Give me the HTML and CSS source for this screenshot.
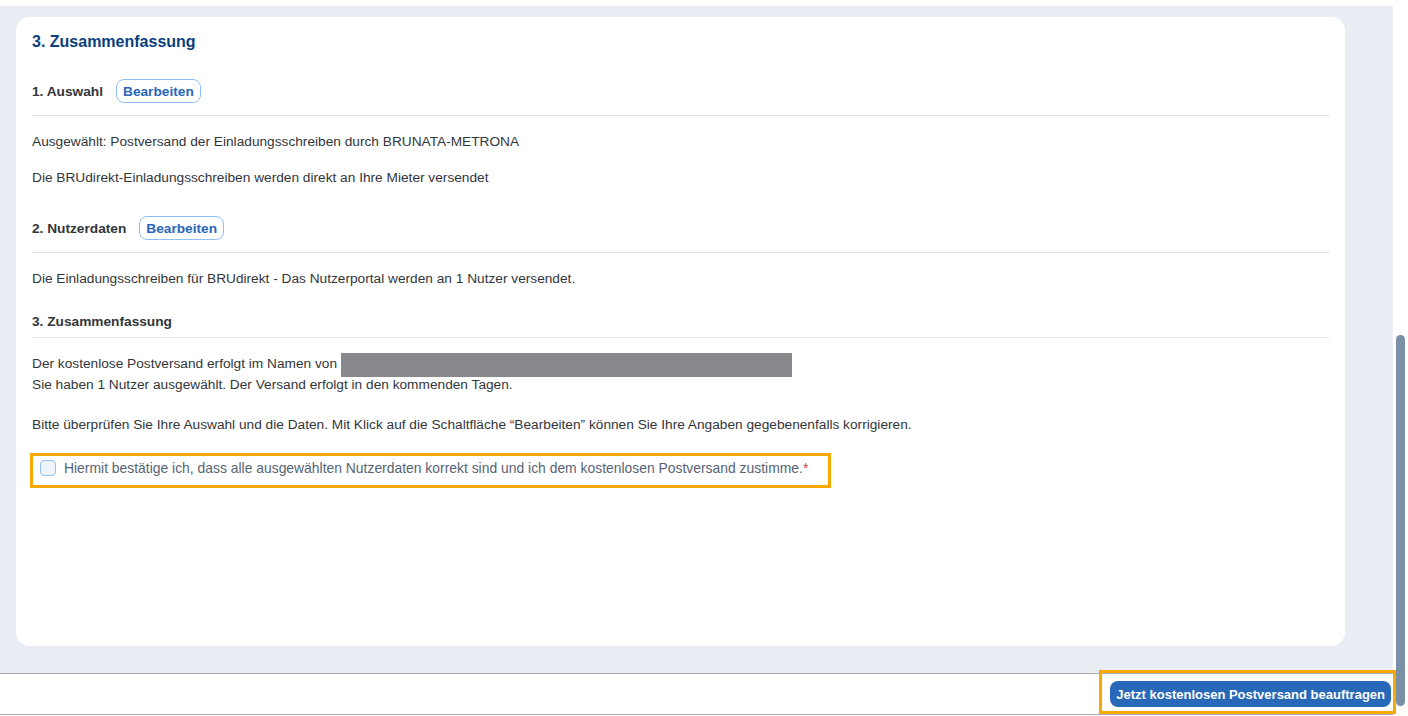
FILE: index.html
```html
<!DOCTYPE html>
<html lang="de">
<head>
    <meta charset="UTF-8">
    <meta name="viewport" content="width=device-width, initial-scale=1.0">
    <title>Zusammenfassung</title>
    <link rel="stylesheet" href="styles.css">
</head>
<body>
    <div class="app">
        <div class="main">
            <div class="content">
                <div class="card">
                    <h2 class="title">3. Zusammenfassung</h2>

                    <div class="section-head">
                        <span class="section-title">1. Auswahl</span>
                        <button class="edit-btn">Bearbeiten</button>
                    </div>
                    <p class="text">Ausgewählt: Postversand der Einladungsschreiben durch BRUNATA-METRONA</p>
                    <p class="text">Die BRUdirekt-Einladungsschreiben werden direkt an Ihre Mieter versendet</p>

                    <div class="section-head next">
                        <span class="section-title">2. Nutzerdaten</span>
                        <button class="edit-btn">Bearbeiten</button>
                    </div>
                    <p class="text">Die Einladungsschreiben für BRUdirekt - Das Nutzerportal werden an 1 Nutzer versendet.</p>

                    <div class="section-head plain">
                        <span class="section-title">3. Zusammenfassung</span>
                    </div>
                    <p class="text">Der kostenlose Postversand erfolgt im Namen von<span class="redacted"></span><br>Sie haben 1 Nutzer ausgewählt. Der Versand erfolgt in den kommenden Tagen.</p>
                    <p class="text note">Bitte überprüfen Sie Ihre Auswahl und die Daten. Mit Klick auf die Schaltfläche “Bearbeiten” können Sie Ihre Angaben gegebenenfalls korrigieren.</p>

                    <label class="confirm">
                        <span class="checkbox"></span>
                        <span class="confirm-text">Hiermit bestätige ich, dass alle ausgewählten Nutzerdaten korrekt sind und ich dem kostenlosen Postversand zustimme.<span class="req">*</span></span>
                    </label>
                </div>
            </div>
            <div class="footer">
                <div class="submit-wrap">
                    <button class="submit-btn">Jetzt kostenlosen Postversand beauftragen</button>
                </div>
            </div>
        </div>
        <div class="scrollbar">
            <div class="thumb"></div>
        </div>
    </div>
</body>
</html>
```

FILE: styles.css
```css
* {
    margin: 0;
    padding: 0;
    box-sizing: border-box;
}

body {
    font-family: 'Liberation Sans', Arial, sans-serif;
    font-size: 13.7px;
    color: #32363a;
    background: #ffffff;
    width: 1408px;
    height: 716px;
    overflow: hidden;
}

.app {
    display: flex;
    height: 716px;
}

.main {
    width: 1393px;
    display: flex;
    flex-direction: column;
}

.content {
    margin-top: 6px;
    height: 667px;
    background: #eaedf4;
    padding: 11px 48px 27px 16px;
}

.card {
    background: #ffffff;
    border-radius: 14px;
    height: 629px;
    padding: 15px 16px 0 16px;
}

.title {
    color: #0a3f7e;
    font-size: 16px;
    font-weight: bold;
    line-height: 20px;
    margin-bottom: 27px;
}

.section-head {
    display: flex;
    align-items: center;
    gap: 13px;
    height: 37px;
    padding-bottom: 12px;
    border-bottom: 1px solid #e0e3e8;
}

.section-head.next {
    margin-top: 28px;
}

.section-head.plain {
    height: 29px;
    padding-bottom: 4px;
    margin-top: 20px;
}

.section-title {
    font-weight: bold;
}

.edit-btn {
    font-family: inherit;
    font-size: 13.7px;
    font-weight: bold;
    color: #2a66b8;
    background: #ffffff;
    border: 1px solid #8ec0f6;
    border-radius: 8px;
    height: 24px;
    padding: 0 6px;
}

.text {
    line-height: 20px;
    margin-top: 16px;
}

.text.note {
    margin-top: 20px;
}

.redacted {
    display: inline-block;
    width: 451px;
    height: 24px;
    margin: -2px 0 -2px 4px;
    background: #86888c;
    vertical-align: -7px;
}

.confirm {
    display: flex;
    align-items: center;
    gap: 8px;
    width: fit-content;
    margin-top: 18px;
    margin-left: -2px;
    padding: 0 20px 6px 7px;
    height: 35px;
    border: 3px solid #f9a800;
}

.checkbox {
    width: 16px;
    height: 16px;
    border: 1.5px solid #90c0f4;
    border-radius: 4px;
    background: #eef4fc;
}

.confirm-text {
    font-size: 13.9px;
    color: #566475;
}

.req {
    color: #c94a4a;
}

.footer {
    flex: 1;
    border-top: 1px solid #a7abb0;
    border-bottom: 1px solid #a7abb0;
    display: flex;
    justify-content: flex-end;
    align-items: flex-start;
    margin-bottom: 1px;
}

.submit-wrap {
    border: 3px solid #f9a800;
    padding: 8px 2px 4px 8px;
    margin-right: -3px;
    margin-top: -4px;
    height: 44px;
}

.submit-btn {
    display: block;
    font-family: inherit;
    font-size: 13px;
    font-weight: bold;
    color: #ffffff;
    background: #2868b8;
    border: none;
    border-radius: 8px;
    height: 26px;
    padding: 0 6px;
}

.scrollbar {
    width: 15px;
    padding: 335px 3px 0 3px;
}

.thumb {
    width: 9px;
    height: 371px;
    background: #7b8fa6;
    border-radius: 5px;
}
```
